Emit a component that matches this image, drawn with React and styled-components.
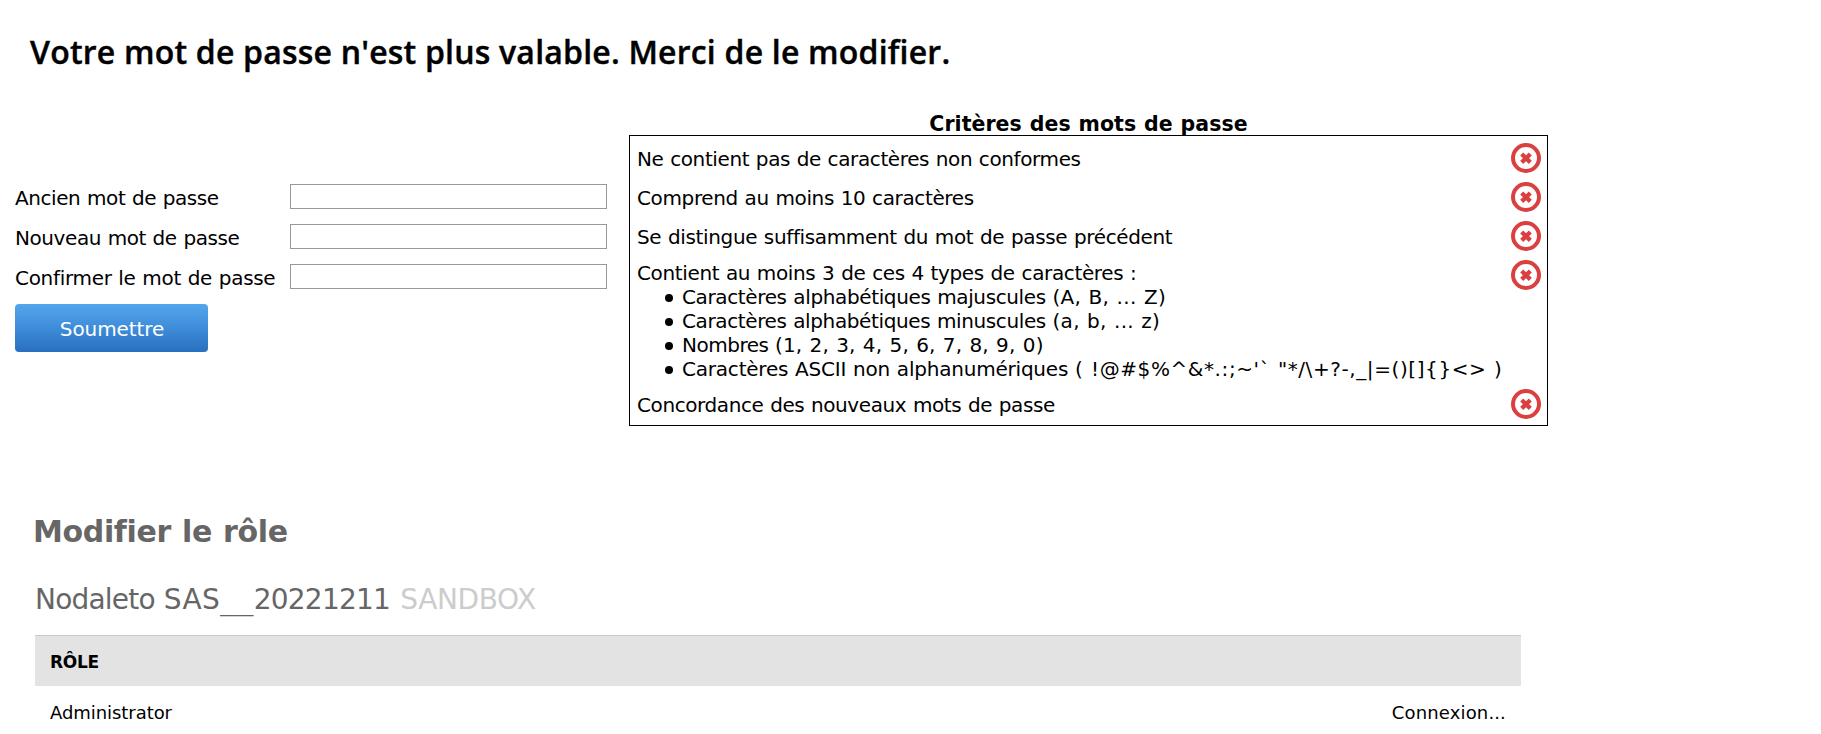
import React from 'react';
import styled, { createGlobalStyle } from 'styled-components';

const GlobalStyle = createGlobalStyle`
  *, *::before, *::after { box-sizing: border-box; }
  body {
    margin: 0;
    background: #fff;
    color: #000;
    font-family: Verdana, 'DejaVu Sans', sans-serif;
    font-size: 20px;
    line-height: 24px;
    word-spacing: 0.7px;
  }
`;

const Page = styled.main`
  width: 1821px;
  height: 734px;
  overflow: hidden;
`;

const Text = styled.span`
  letter-spacing: ${(p) => p.$spacing || 0}px;
  white-space: pre;
`;

const Notice = styled.h1`
  margin: 0;
  padding: 30px 0 38px 30px;
  font: 600 32px/44px 'Open Sans', sans-serif;
  word-spacing: 0;
  letter-spacing: 0.205px;
  -webkit-text-stroke: 0.4px #000;
`;

const PasswordArea = styled.section`
  display: flex;
  align-items: flex-start;
  height: 402px;
`;

const Form = styled.form`
  width: 629px;
  padding: 65px 0 0 15px;
`;

const Field = styled.label`
  display: grid;
  grid-template-columns: 275px 317px;
  align-items: start;
  height: 40px;
  padding-top: 7px;

  > span { padding-top: 2px; }
`;

const Input = styled.input`
  height: 25px;
  margin: 0;
  border: 1px solid #999;
  border-radius: 0;
  background: #fff;
  outline: none;
`;

const Submit = styled.button`
  display: block;
  width: 193px;
  height: 48px;
  margin-top: 7px;
  padding: 13px 0 11px 1px;
  border: 0;
  border-radius: 4px;
  background: linear-gradient(#52a6eb, #418fdc 45%, #2870bf);
  color: #fff;
  font: inherit;
  word-spacing: inherit;
`;

const Criteria = styled.div`
  width: 919px;
`;

const CriteriaTitle = styled.h2`
  height: 23px;
  margin: 0;
  font-size: 20.5px;
  line-height: 24px;
  text-align: center;
`;

const CriteriaBox = styled.div`
  border: 1px solid #000;
  padding: 3px 6px 1px 7px;
`;

const Criterion = styled.div`
  display: flex;
  justify-content: space-between;
  align-items: flex-start;
  height: ${(p) => (p.$tall ? 129 : 39)}px;
  padding-top: ${(p) => (p.$tall ? 5 : 8)}px;

  > svg {
    flex: none;
    margin-top: ${(p) => (p.$tall ? -1 : -4)}px;
  }
`;

const Kinds = styled.ul`
  margin: 0;
  padding: 0;
  list-style: none;
`;

const Kind = styled.li`
  display: flex;
  align-items: center;
  padding-left: 28px;
  white-space: pre;

  &::before {
    content: '';
    width: 8px;
    height: 8px;
    margin: 1px 9px 0 0;
    border-radius: 50%;
    background: #000;
  }
`;

const Roles = styled.section`
  width: 1521px;
  padding-left: 35px;
`;

const RolesTitle = styled.h2`
  margin: 0 0 33px -2px;
  font-size: 30px;
  line-height: 36px;
  letter-spacing: -0.35px;
  word-spacing: 1px;
  color: #666;
`;

const Account = styled.div`
  display: flex;
  height: 34px;
  margin-bottom: 18px;
  font-size: 28px;
  line-height: 34px;
  word-spacing: 1px;
  color: #666;
`;

const Underscores = styled(Text)`
  font-family: 'DejaVu Sans Mono', monospace;
`;

const Environment = styled(Text)`
  margin-left: 10px;
  color: #ccc;
`;

const TableHead = styled.div`
  height: 51px;
  border-top: 1px solid #c8c8c8;
  padding: 16px 15px 0;
  background: #e3e3e3;
  font-size: 17px;
  font-weight: 700;
  line-height: 20px;
  letter-spacing: -0.29px;
`;

const TableRow = styled.div`
  display: flex;
  justify-content: space-between;
  padding: 16px 15px 0;
  font-size: 18px;
  line-height: 22px;
`;

const Cross = () => (
  <svg width="30" height="30" viewBox="0 0 30 30" fill="none" stroke="#db4040">
    <circle cx="15" cy="15" r="13" strokeWidth="4" />
    <path d="M10.7 11 L19.3 19.4 M19.3 11 L10.7 19.4" strokeWidth="4.3" />
  </svg>
);

const fields = [
  ['Ancien mot de passe', -0.42],
  ['Nouveau mot de passe', -0.42],
  ['Confirmer le mot de passe', -0.31],
];

const criteria = [
  ['Ne contient pas de caractères non conformes', -0.389],
  ['Comprend au moins 10 caractères', -0.37],
  ['Se distingue suffisamment du mot de passe précédent', -0.36],
];

const kinds = [
  ['Caractères alphabétiques majuscules ', -0.37, '(A, B, ... Z)', 0.3],
  ['Caractères alphabétiques minuscules ', -0.38, '(a, b, ... z)', 0.27],
  ['Nombres ', -0.5, '(1, 2, 3, 4, 5, 6, 7, 8, 9, 0)', 0.17],
  ['Caractères ASCII non alphanumériques ', -0.21, '( !@#$%^&*.:;~\'` "*/\\+?-,_|=()[]{}<> )', 0.59],
];

export default function App() {
  return (
    <Page>
      <GlobalStyle />
      <Notice>Votre mot de passe n'est plus valable. Merci de le modifier.</Notice>
      <PasswordArea>
        <Form>
          {fields.map(([label, spacing]) => (
            <Field key={label}>
              <Text $spacing={spacing}>{label}</Text>
              <Input type="password" />
            </Field>
          ))}
          <Submit type="button">
            <Text $spacing={-0.1}>Soumettre</Text>
          </Submit>
        </Form>
        <Criteria>
          <CriteriaTitle>
            <Text $spacing={0.05}>Critères des mots de passe</Text>
          </CriteriaTitle>
          <CriteriaBox>
            {criteria.map(([label, spacing]) => (
              <Criterion key={label}>
                <Text $spacing={spacing}>{label}</Text>
                <Cross />
              </Criterion>
            ))}
            <Criterion $tall>
              <div>
                <Text $spacing={-0.36}>Contient au moins 3 de ces 4 types de caractères :</Text>
                <Kinds>
                  {kinds.map(([name, nameSpacing, sample, sampleSpacing]) => (
                    <Kind key={name}>
                      <Text $spacing={nameSpacing}>{name}</Text>
                      <Text $spacing={sampleSpacing}>{sample}</Text>
                    </Kind>
                  ))}
                </Kinds>
              </div>
              <Cross />
            </Criterion>
            <Criterion>
              <Text $spacing={-0.403}>Concordance des nouveaux mots de passe</Text>
              <Cross />
            </Criterion>
          </CriteriaBox>
        </Criteria>
      </PasswordArea>
      <Roles>
        <RolesTitle>Modifier le rôle</RolesTitle>
        <Account>
          <Text $spacing={-0.8}>Nodaleto </Text>
          <Text $spacing={0.3}>SAS</Text>
          <Underscores $spacing={0}>__</Underscores>
          <Text $spacing={-0.75}>20221211</Text>
          <Environment $spacing={-0.35}>SANDBOX</Environment>
        </Account>
        <TableHead>RÔLE</TableHead>
        <TableRow>
          <Text $spacing={-0.06}>Administrator</Text>
          <Text $spacing={0.15}>Connexion...</Text>
        </TableRow>
      </Roles>
    </Page>
  );
}
